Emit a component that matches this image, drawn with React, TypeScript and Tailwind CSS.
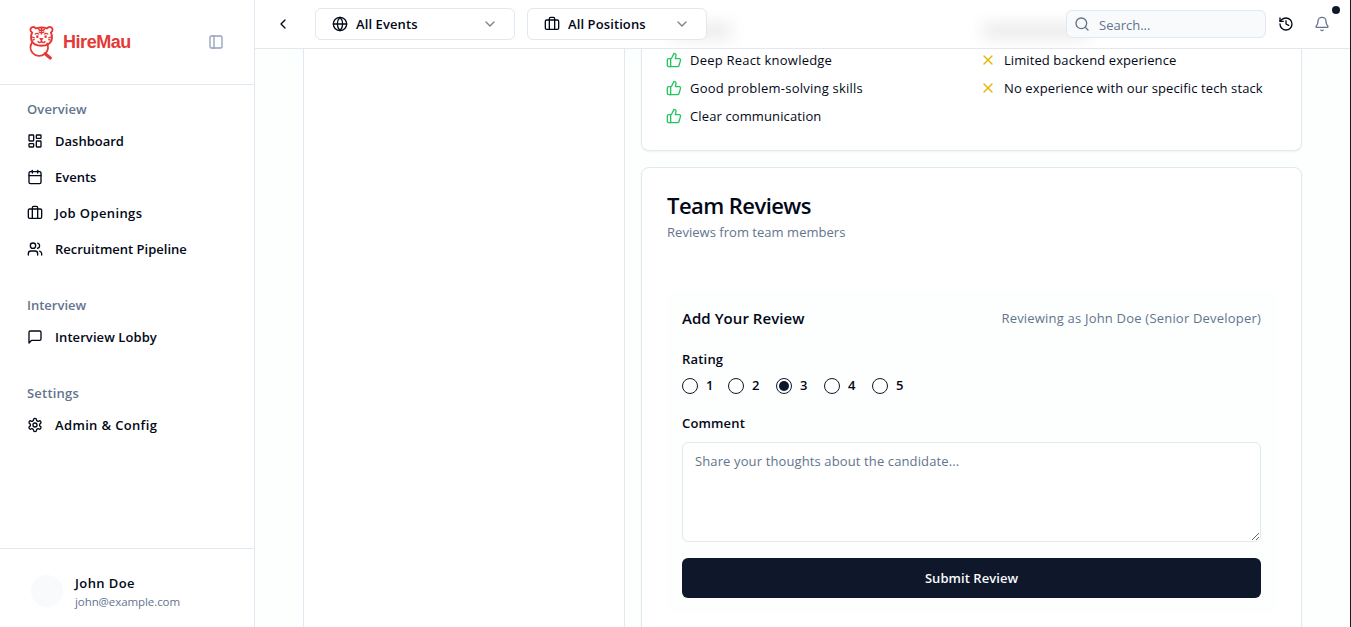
import React, { useState } from "react";
import {
  Bell, Briefcase, Calendar, ChevronDown, ChevronLeft, Globe, History,
  LayoutDashboard, PanelLeft, Search, ThumbsUp, Users, X,
} from "lucide-react";

function MessageIcon({ className }: { className?: string }) {
  return (
    <svg className={className} viewBox="0 0 24 24" fill="none" stroke="currentColor" strokeWidth="2" strokeLinecap="round" strokeLinejoin="round">
      <path d="M21 15a2 2 0 0 1-2 2H7l-4 4V5a2 2 0 0 1 2-2h14a2 2 0 0 1 2 2z" />
    </svg>
  );
}

function GearIcon({ className }: { className?: string }) {
  return (
    <svg className={className} viewBox="0 0 24 24" fill="none" stroke="currentColor" strokeWidth="2" strokeLinecap="round" strokeLinejoin="round">
      <path d="M12.22 2h-.44a2 2 0 0 0-2 2v.18a2 2 0 0 1-1 1.73l-.43.25a2 2 0 0 1-2 0l-.15-.08a2 2 0 0 0-2.73.73l-.22.38a2 2 0 0 0 .73 2.73l.15.1a2 2 0 0 1 1 1.72v.51a2 2 0 0 1-1 1.74l-.15.09a2 2 0 0 0-.73 2.73l.22.38a2 2 0 0 0 2.73.73l.15-.08a2 2 0 0 1 2 0l.43.25a2 2 0 0 1 1 1.73V20a2 2 0 0 0 2 2h.44a2 2 0 0 0 2-2v-.18a2 2 0 0 1 1-1.73l.43-.25a2 2 0 0 1 2 0l.15.08a2 2 0 0 0 2.73-.73l.22-.39a2 2 0 0 0-.73-2.73l-.15-.08a2 2 0 0 1-1-1.74v-.5a2 2 0 0 1 1-1.74l.15-.09a2 2 0 0 0 .73-2.73l-.22-.38a2 2 0 0 0-2.73-.73l-.15.08a2 2 0 0 1-2 0l-.43-.25a2 2 0 0 1-1-1.73V4a2 2 0 0 0-2-2z" />
      <circle cx="12" cy="12" r="3" />
    </svg>
  );
}

function TigerLogo() {
  return (
    <svg className="mt-px h-[34px] w-[25px] shrink-0 text-[#e53935]" viewBox="0 0 25.400 34.500" fill="none" stroke="currentColor" strokeWidth="1.900" strokeLinecap="round" strokeLinejoin="round">
      <path d="M3.2 6.6C1 5.4.9 2.200 2.900 1.300c1.600-.7 3.300 0 4.200 1.200 3.300-1.200 7.900-1.200 11.200 0 .9-1.200 2.600-1.900 4.200-1.200 2 .9 1.900 4.100-.3 5.300 1.300 2.700 1.500 5.500.6 8.200-1.200 3.200-4.600 5-10.100 5.300-5.500-.3-8.900-2.100-10.100-5.300-.9-2.700-.7-5.500.6-8.200Z" />
      <path d="M12.700 2v6M9.800 3.400c.5.900 1.500 1.200 2.900 1.200s2.400-.3 2.900-1.200M10.300 6.100c.7.600 1.500.8 2.400.8s1.700-.2 2.400-.8" strokeWidth="1.400" />
      <path d="M6.300 8.200c1.200-1 2.600-.9 3.500 0M15.600 8.200c.9-.9 2.300-1 3.500 0M3.200 11.400l2.200.6M3.400 14.400l2-.5M22.200 11.400l-2.200.6M22 14.400l-2-.5" strokeWidth="1.300" />
      <path d="M12.700 14v1.700c-.8 1.300-2.800 1.300-3.500.1M12.700 15.700c.8 1.300 2.800 1.300 3.500.1" strokeWidth="1.500" />
      <path d="M11.200 12.700h3l-1.500 1.600Z" fill="currentColor" strokeWidth="1" />
      <circle cx="8.500" cy="10.800" r="1.300" fill="currentColor" stroke="none" />
      <circle cx="16.900" cy="10.800" r="1.300" fill="currentColor" stroke="none" />
      <path d="M3.200 16.600c-2.300 3.200-2.200 7.700.5 10.800 3.200 3.600 8.700 4 12.300.9 3.200-2.700 4-6.900 2.400-10.500" />
      <path d="M16.400 28.200l5.200 4.300" strokeWidth="3.200" />
    </svg>
  );
}

type IconType = React.ComponentType<{ className?: string }>;

const sections: { title: string; tracking: string; items: { icon: IconType; label: string; tracking: string }[] }[] = [
  {
    title: "Overview",
    tracking: "tracking-[0.1px]",
    items: [
      { icon: LayoutDashboard, label: "Dashboard", tracking: "" },
      { icon: Calendar, label: "Events", tracking: "" },
      { icon: Briefcase, label: "Job Openings", tracking: "tracking-[0.38px]" },
      { icon: Users, label: "Recruitment Pipeline", tracking: "" },
    ],
  },
  { title: "Interview", tracking: "", items: [{ icon: MessageIcon, label: "Interview Lobby", tracking: "tracking-[0.08px]" }] },
  { title: "Settings", tracking: "tracking-[0.2px]", items: [{ icon: GearIcon, label: "Admin & Config", tracking: "tracking-[0.35px]" }] },
];

function Sidebar() {
  return (
    <aside className="flex w-[255px] shrink-0 flex-col border-r border-slate-200 bg-white">
      <div className="flex h-[85px] items-center border-b border-slate-200 pl-[29px] pr-[30px]">
        <TigerLogo />
        <span className="ml-[9px] flex-1 font-['Liberation_Sans',sans-serif] text-lg font-bold tracking-tight text-[#e53935]">HireMau</span>
        <PanelLeft className="size-4 text-slate-400" />
      </div>
      <nav className="flex flex-1 flex-col gap-[29px] pt-4">
        {sections.map((s) => (
          <div key={s.title}>
            <div className={`mb-[5px] flex h-[18px] items-center pl-[27px] font-semibold text-slate-500 ${s.tracking}`}>{s.title}</div>
            {s.items.map(({ icon: Icon, label, tracking }) => (
              <a key={label} className="flex h-9 items-center gap-3 pl-[27px] font-semibold">
                <Icon className="mb-0.5 size-4 shrink-0" />
                <span className={tracking}>{label}</span>
              </a>
            ))}
          </div>
        ))}
      </nav>
      <div className="flex h-[79px] items-center gap-3 border-t border-slate-200 pl-[31px] pt-[6px]">
        <div className="size-8 rounded-full bg-slate-50" />
        <div className="pt-0.5">
          <div className="h-5 font-semibold leading-5 tracking-[0.4px]">John Doe</div>
          <div className="text-[11.5px] leading-[18px] tracking-[-0.08px] text-slate-500">john@example.com</div>
        </div>
      </div>
    </aside>
  );
}

function Picker({ icon: Icon, label, className }: { icon: IconType; label: string; className: string }) {
  return (
    <button className={`flex h-8 items-center gap-2 rounded-md border border-slate-200 bg-white px-4 font-semibold ${className}`}>
      <Icon className="size-4" />
      <span className="flex-1 pt-0.5 text-left tracking-[0.1px]">{label}</span>
      <ChevronDown className="size-4 opacity-50" />
    </button>
  );
}

function TopBar() {
  return (
    <header className="relative flex h-[49px] shrink-0 items-center overflow-hidden border-b border-slate-200 bg-white">
      <span className="absolute left-[416px] top-[24px] h-3.5 w-[60px] bg-black/9 blur-[8px]" />
      <span className="absolute left-[728px] top-[24px] h-3.5 w-[104px] bg-black/9 blur-[8px]" />
      <div className="relative flex flex-1 items-center pl-[20px] pr-[20px]">
        <ChevronLeft className="size-4" />
        <Picker icon={Globe} label="All Events" className="ml-6 w-[200px]" />
        <Picker icon={Briefcase} label="All Positions" className="ml-3 w-[180px]" />
        <div className="ml-auto flex h-7 w-[200px] items-center gap-[9px] rounded-md border border-slate-200 bg-slate-50 px-[7px] text-slate-500">
          <Search className="size-4" />
          <span className="pt-[3px]">Search...</span>
        </div>
        <History className="ml-3 size-4" />
        <div className="relative ml-5">
          <Bell className="size-4 text-slate-500" />
          <span className="absolute -top-[10px] left-[18px] size-2 rounded-full bg-slate-900" />
        </div>
      </div>
    </header>
  );
}

const strengths = [
  { text: "Deep React knowledge", tracking: "tracking-[0.22px]" },
  { text: "Good problem-solving skills", tracking: "tracking-[0.23px]" },
  { text: "Clear communication", tracking: "tracking-[0.12px]" },
];

const concerns = [
  { text: "Limited backend experience", tracking: "tracking-[0.08px]" },
  { text: "No experience with our specific tech stack", tracking: "tracking-[0.12px]" },
];

function Feedback() {
  return (
    <section className="grid h-[102px] shrink-0 grid-cols-[314px_1fr] rounded-b-lg border border-t-0 border-slate-200 bg-white px-6 pt-px shadow-xs">
      <ul className="flex flex-col gap-2">
        {strengths.map(({ text, tracking }) => (
          <li key={text} className="flex h-5 items-center gap-2">
            <ThumbsUp className="size-4 text-[#22c55e]" />
            <span className={`pt-0.5 ${tracking}`}>{text}</span>
          </li>
        ))}
      </ul>
      <ul className="flex flex-col gap-2">
        {concerns.map(({ text, tracking }) => (
          <li key={text} className="flex h-5 items-center gap-2">
            <X className="size-4 text-[#eab308]" />
            <span className={`pt-0.5 ${tracking}`}>{text}</span>
          </li>
        ))}
      </ul>
    </section>
  );
}

function ReviewForm() {
  const [rating, setRating] = useState(3);
  return (
    <div className="mt-12 rounded-lg bg-[#fdfefe] p-4">
      <div className="flex h-6 items-center justify-between">
        <h3 className="text-[15px] font-semibold tracking-[0.05px]">Add Your Review</h3>
        <span className="pt-0.5 tracking-[0.2px] text-slate-500">Reviewing as John Doe (Senior Developer)</span>
      </div>
      <div className="mt-[19px] h-5 font-semibold leading-5 tracking-[0.2px]">Rating</div>
      <div className="mt-[9px] flex h-4 items-center">
        {[1, 2, 3, 4, 5].map((n) => (
          <label key={n} className={`flex items-center gap-2 font-semibold ${n === 1 ? "w-[46px]" : "w-12"}`}>
            <button
              onClick={() => setRating(n)}
              className="flex size-4 items-center justify-center rounded-full border border-slate-900 bg-white"
            >
              {rating === n && <span className="size-2.5 rounded-full bg-slate-900" />}
            </button>
            {n}
          </label>
        ))}
      </div>
      <div className="mt-[19px] h-5 font-semibold leading-5 tracking-[0.15px]">Comment</div>
      <textarea
        placeholder="Share your thoughts about the candidate..."
        className="mt-[9px] block h-[100px] w-full resize-y rounded-md border border-slate-200 bg-white px-3 py-2 leading-5 tracking-[0.12px] placeholder:text-slate-500"
      />
      <button className="mt-4 h-10 w-full rounded-md bg-slate-900 pt-0.5 font-semibold tracking-[0.05px] text-slate-50">Submit Review</button>
    </div>
  );
}

export default function App() {
  return (
    <div className="flex h-[627px] w-[1351px] overflow-hidden bg-white font-['Open_Sans',sans-serif] text-[13px] text-[#020817]">
      <Sidebar />
      <div className="flex min-w-0 flex-1 flex-col border-r border-[#1c1c1c] bg-[#fdfefe]">
        <TopBar />
        <main className="flex min-h-0 flex-1 overflow-hidden pl-12 pr-12">
          <div className="w-[322px] shrink-0 border-x border-slate-200 bg-white" />
          <div className="ml-4 flex min-w-0 flex-1 flex-col gap-4">
            <Feedback />
            <section className="h-[480px] shrink-0 rounded-t-lg border border-slate-200 bg-white px-6 pt-6 shadow-xs">
              <h2 className="mt-px pl-px text-[22px] font-semibold leading-6 tracking-tight">Team Reviews</h2>
              <p className="mt-[5px] h-5 pl-px leading-5 tracking-[0.03px] text-slate-500">Reviews from team members</p>
              <ReviewForm />
            </section>
          </div>
        </main>
      </div>
    </div>
  );
}
